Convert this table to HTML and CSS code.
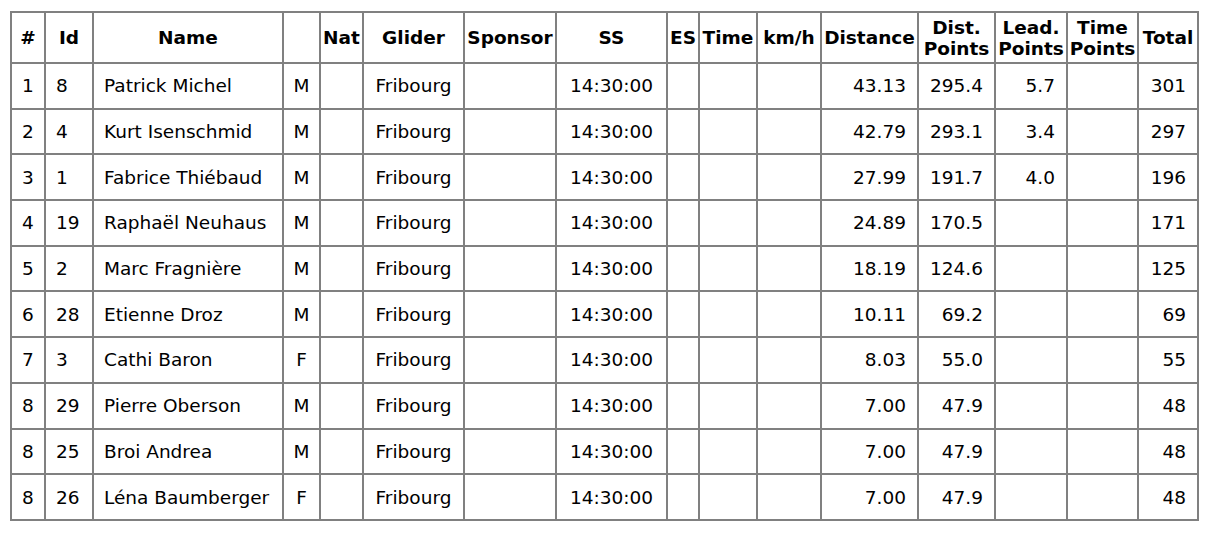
FILE: index.html
```html
<!DOCTYPE html>
<html>
<head>
<meta charset="utf-8">
<link rel="stylesheet" href="styles.css">
</head>
<body>
<table class="results">
  <colgroup>
    <col class="c-rank"><col class="c-id"><col class="c-name"><col class="c-sex"><col class="c-nat"><col class="c-glider"><col class="c-sponsor"><col class="c-ss"><col class="c-es"><col class="c-time"><col class="c-kmh"><col class="c-dist"><col class="c-dpts"><col class="c-lpts"><col class="c-tpts"><col class="c-total">
  </colgroup>
  <thead>
    <tr class="head">
      <th>#</th><th>Id</th><th>Name</th><th></th><th>Nat</th><th>Glider</th><th>Sponsor</th><th>SS</th><th>ES</th><th>Time</th><th>km/h</th><th>Distance</th><th>Dist.<br>Points</th><th>Lead.<br>Points</th><th>Time<br>Points</th><th>Total</th>
    </tr>
  </thead>
  <tbody>
    <tr><td class="ctr">1</td><td>8</td><td>Patrick Michel</td><td class="ctr">M</td><td></td><td class="ctr">Fribourg</td><td></td><td class="ctr">14:30:00</td><td></td><td></td><td></td><td class="rt">43.13</td><td class="rt">295.4</td><td class="rt">5.7</td><td></td><td class="rt">301</td></tr>
    <tr><td class="ctr">2</td><td>4</td><td>Kurt Isenschmid</td><td class="ctr">M</td><td></td><td class="ctr">Fribourg</td><td></td><td class="ctr">14:30:00</td><td></td><td></td><td></td><td class="rt">42.79</td><td class="rt">293.1</td><td class="rt">3.4</td><td></td><td class="rt">297</td></tr>
    <tr><td class="ctr">3</td><td>1</td><td>Fabrice Thiébaud</td><td class="ctr">M</td><td></td><td class="ctr">Fribourg</td><td></td><td class="ctr">14:30:00</td><td></td><td></td><td></td><td class="rt">27.99</td><td class="rt">191.7</td><td class="rt">4.0</td><td></td><td class="rt">196</td></tr>
    <tr><td class="ctr">4</td><td>19</td><td>Raphaël Neuhaus</td><td class="ctr">M</td><td></td><td class="ctr">Fribourg</td><td></td><td class="ctr">14:30:00</td><td></td><td></td><td></td><td class="rt">24.89</td><td class="rt">170.5</td><td class="rt"></td><td></td><td class="rt">171</td></tr>
    <tr><td class="ctr">5</td><td>2</td><td>Marc Fragnière</td><td class="ctr">M</td><td></td><td class="ctr">Fribourg</td><td></td><td class="ctr">14:30:00</td><td></td><td></td><td></td><td class="rt">18.19</td><td class="rt">124.6</td><td class="rt"></td><td></td><td class="rt">125</td></tr>
    <tr><td class="ctr">6</td><td>28</td><td>Etienne Droz</td><td class="ctr">M</td><td></td><td class="ctr">Fribourg</td><td></td><td class="ctr">14:30:00</td><td></td><td></td><td></td><td class="rt">10.11</td><td class="rt">69.2</td><td class="rt"></td><td></td><td class="rt">69</td></tr>
    <tr><td class="ctr">7</td><td>3</td><td>Cathi Baron</td><td class="ctr">F</td><td></td><td class="ctr">Fribourg</td><td></td><td class="ctr">14:30:00</td><td></td><td></td><td></td><td class="rt">8.03</td><td class="rt">55.0</td><td class="rt"></td><td></td><td class="rt">55</td></tr>
    <tr><td class="ctr">8</td><td>29</td><td>Pierre Oberson</td><td class="ctr">M</td><td></td><td class="ctr">Fribourg</td><td></td><td class="ctr">14:30:00</td><td></td><td></td><td></td><td class="rt">7.00</td><td class="rt">47.9</td><td class="rt"></td><td></td><td class="rt">48</td></tr>
    <tr><td class="ctr">8</td><td>25</td><td>Broi Andrea</td><td class="ctr">M</td><td></td><td class="ctr">Fribourg</td><td></td><td class="ctr">14:30:00</td><td></td><td></td><td></td><td class="rt">7.00</td><td class="rt">47.9</td><td class="rt"></td><td></td><td class="rt">48</td></tr>
    <tr><td class="ctr">8</td><td>26</td><td>Léna Baumberger</td><td class="ctr">F</td><td></td><td class="ctr">Fribourg</td><td></td><td class="ctr">14:30:00</td><td></td><td></td><td></td><td class="rt">7.00</td><td class="rt">47.9</td><td class="rt"></td><td></td><td class="rt">48</td></tr>
  </tbody>
</table>
</body>
</html>
```

FILE: styles.css
```css
html, body {
  margin: 0;
  padding: 0;
  background: #ffffff;
}
body {
  padding: 11px 0 0 10px;
  font-family: "DejaVu Sans", Verdana, sans-serif;
  font-size: 18.5px;
  color: #000;
}
.results {
  border-collapse: collapse;
  table-layout: fixed;
  width: 1189px;
  border: 2px solid #808080;
}
.results th, .results td {
  border: 2px solid #808080;
  padding: 0 10px;
  vertical-align: middle;
  white-space: nowrap;
  overflow: hidden;
  text-align: left;
}
.results th {
  font-weight: bold;
  text-align: center;
  padding: 0;
  line-height: 21px;
}
.head { height: 51px; }
tbody tr { height: 45.7px; }
.results td.ctr { text-align: center; padding: 0; }
.results td.rt { text-align: right; padding-right: 11px; padding-left: 0; }

.c-rank { width: 34px; }
.c-id { width: 48px; }
.c-name { width: 190px; }
.c-sex { width: 37px; }
.c-nat { width: 43px; }
.c-glider { width: 101px; }
.c-sponsor { width: 92px; }
.c-ss { width: 111px; }
.c-es { width: 32px; }
.c-time { width: 58px; }
.c-kmh { width: 64px; }
.c-dist { width: 97px; }
.c-dpts { width: 77px; }
.c-lpts { width: 72px; }
.c-tpts { width: 71px; }
.c-total { width: 60px; }
```
